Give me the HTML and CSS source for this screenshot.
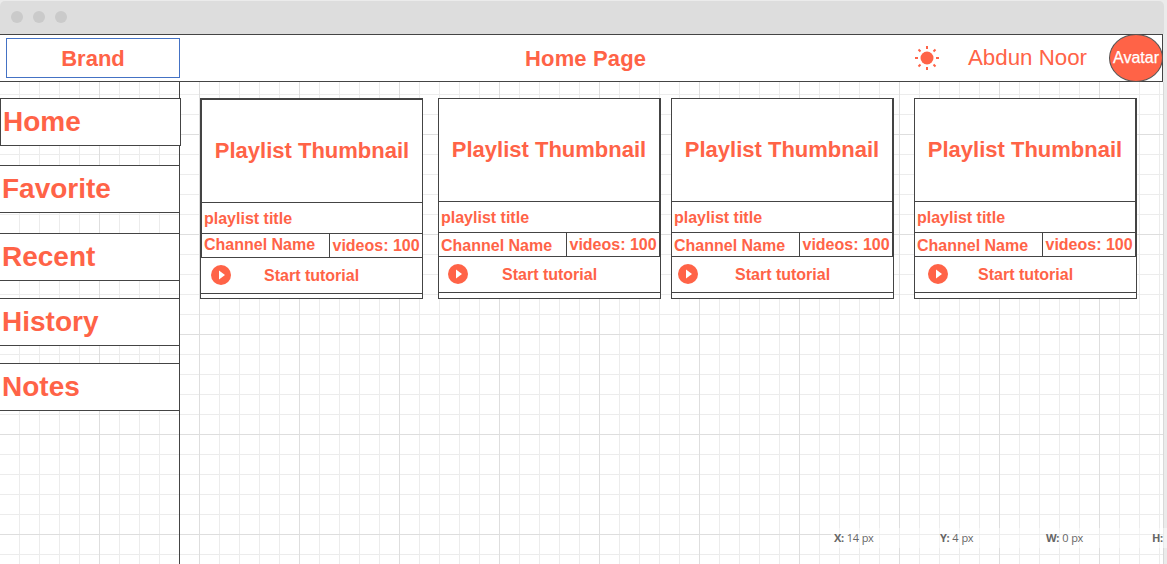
FILE: index.html
```html
<!DOCTYPE html>
<html lang="en">
<head>
<meta charset="utf-8">
<title>Home Page</title>
<link rel="stylesheet" href="styles.css">
</head>
<body>
<svg class="defs" width="0" height="0">
  <symbol id="play" viewBox="0 0 20 20"><circle cx="10" cy="10" r="10" fill="#ff6347"/><path d="M8 5.500v9l6-4.500z" fill="#fff"/></symbol>
</svg>
<div class="window">
  <div class="titlebar"><i class="dot"></i><i class="dot"></i><i class="dot"></i></div>
  <header class="header">
    <div class="brand">Brand</div>
    <h1 class="page-title">Home Page</h1>
    <svg class="sun" viewBox="0 0 24 24"><circle cx="12" cy="12" r="6.500" fill="#ff6347"/><path d="M12 0v3M12 21v3M0 12h3M21 12h3M3.500 3.500l2 2M18.500 18.500l2 2M3.500 20.500l2-2M18.500 5.500l2-2" stroke="#ff6347" stroke-width="2"/></svg>
    <span class="user">Abdun Noor</span>
    <div class="avatar">Avatar</div>
  </header>
  <div class="body">
    <nav class="sidebar">
      <a class="item active">Home</a>
      <a class="item favorite">Favorite</a>
      <a class="item recent">Recent</a>
      <a class="item history">History</a>
      <a class="item notes">Notes</a>
    </nav>
    <main class="cards">
      <article class="card first">
        <div class="info">
          <div class="thumb">Playlist Thumbnail</div>
          <div class="title">playlist title</div>
          <div class="meta"><span class="channel">Channel Name</span><span class="count">videos: 100</span></div>
        </div>
        <div class="start"><svg class="play"><use href="#play"/></svg><span>Start tutorial</span></div>
      </article>
      <article class="card second">
        <div class="info">
          <div class="thumb">Playlist Thumbnail</div>
          <div class="title">playlist title</div>
          <div class="meta"><span class="channel">Channel Name</span><span class="count">videos: 100</span></div>
        </div>
        <div class="start"><svg class="play"><use href="#play"/></svg><span>Start tutorial</span></div>
      </article>
      <article class="card third">
        <div class="info">
          <div class="thumb">Playlist Thumbnail</div>
          <div class="title">playlist title</div>
          <div class="meta"><span class="channel">Channel Name</span><span class="count">videos: 100</span></div>
        </div>
        <div class="start"><svg class="play"><use href="#play"/></svg><span>Start tutorial</span></div>
      </article>
      <article class="card fourth">
        <div class="info">
          <div class="thumb">Playlist Thumbnail</div>
          <div class="title">playlist title</div>
          <div class="meta"><span class="channel">Channel Name</span><span class="count">videos: 100</span></div>
        </div>
        <div class="start"><svg class="play"><use href="#play"/></svg><span>Start tutorial</span></div>
      </article>
    </main>
  </div>
</div>
<div class="status">
  <span><b>X:</b> 14 px</span><span><b>Y:</b> 4 px</span><span><b>W:</b> 0 px</span><span><b>H:</b></span>
</div>
</body>
</html>
```

FILE: styles.css
```css
* { box-sizing: border-box; }
body {
  margin: 0;
  height: 564px;
  overflow: hidden;
  background: #ebebeb;
  color: #ff6347;
  font-family: "Liberation Sans", Arial, sans-serif;
}
.defs { position: absolute; }
.window {
  display: flex;
  flex-direction: column;
  width: 1164px;
  height: 564px;
  padding-top: 1px;
}
.titlebar {
  display: flex;
  align-items: center;
  gap: 10px;
  height: 33px;
  padding: 0 0 1px 11px;
  background: #ddd;
  border-radius: 5px 5px 0 0;
}
.dot { width: 12px; height: 12px; border-radius: 50%; background: #cacaca; }
.header {
  display: flex;
  align-items: center;
  width: 1163px;
  height: 48px;
  padding-left: 6px;
  background: #fff;
  border: 1px solid #444;
  border-left: 0;
}
.brand {
  width: 174px;
  height: 40px;
  border: 1px solid #4472c4;
  font: bold 22px/39px "Liberation Sans", Arial, sans-serif;
  text-align: center;
}
.page-title {
  margin: 0 0 0 345px;
  padding-top: 1px;
  width: 389px;
  font-size: 22px;
  letter-spacing: .15px;
  line-height: 46px;
}
.sun { width: 24px; height: 24px; margin: 0 0 1px 1px; }
.user { margin-left: 29px; width: 141px; font-size: 22.300px; line-height: 44px; }
.avatar {
  flex: none;
  width: 54px;
  height: 48px;
  margin: -1px -1px -1px 0;
  border: 1px solid #555;
  border-radius: 50%;
  background: #ff6347;
  color: #fff;
  font-size: 16px;
  -webkit-text-stroke: .25px #fff;
  line-height: 45px;
  display: flex;
  justify-content: center;
}
.body {
  flex: 1;
  display: flex;
  border-right: 1px solid #d9d9d9;
  background-color: #fff;
  background-image:
    linear-gradient(90deg, transparent 99px, #dedede 99px),
    linear-gradient(transparent 99px, #dedede 99px),
    linear-gradient(90deg, transparent 19px, #ececec 19px),
    linear-gradient(transparent 19px, #ececec 19px);
  background-size: 100px 100px, 100px 100px, 20px 20px, 20px 20px;
  background-position: 0 0, 0 53px, 0 0, 0 -7px;
}
.sidebar {
  width: 180px;
  padding-top: 16px;
  border-right: 1px solid #444;
}
.item {
  display: block;
  height: 48px;
  padding-left: 2px;
  background: #fff;
  border: solid #444;
  border-width: 1px 0;
  font-size: 28px;
  font-weight: bold;
  line-height: 45px;
}
.active { width: 181px; border-width: 1px; }
.favorite { margin-top: 19px; }
.recent { margin-top: 20px; }
.history, .notes { margin-top: 17px; }
.cards { display: flex; align-items: flex-start; padding: 16px 0 0 20px; }
.card {
  flex: none;
  width: 223px;
  height: 201px;
  background: #fff;
  box-shadow: inset 0 0 0 1px #444;
  font-size: 16px;
  font-weight: bold;
}
.first { padding-top: 1px; }
.first .info { margin-left: 1px; }
.second { margin-left: 15px; }
.third { margin-left: 10px; }
.fourth { margin-left: 20px; }
.info { width: 222px; border: 1px solid #444; border-bottom: 0; }
.thumb {
  height: 103px;
  border-bottom: 1px solid #444;
  font-size: 22px;
  line-height: 102px;
  text-align: center;
}
.title { height: 31px; padding-left: 2px; border-bottom: 1px solid #444; line-height: 31px; }
.meta { display: flex; height: 24px; border-bottom: 1px solid #444; line-height: 25px; }
.channel { width: 127px; padding-left: 2px; }
.first .channel { line-height: 22px; }
.count { flex: 1; padding-left: 2.500px; border-left: 1px solid #444; line-height: 23px; white-space: nowrap; }
.first .count { line-height: 24px; }
.start {
  display: flex;
  align-items: center;
  height: 36px;
  border-bottom: 1px solid #444;
  padding-left: 10px;
  line-height: 34px;
}
.play { width: 20px; height: 20px; margin: 0 34px 2px 0; }
.first .start { padding-left: 11px; }
.first .play { margin-right: 33px; }
.third .start { padding-left: 7px; }
.third .play { margin-right: 37px; }
.fourth .start { padding-left: 14px; }
.fourth .play { margin-right: 30px; }
.status {
  position: absolute;
  left: 831px;
  top: 528px;
  display: flex;
  width: 336px;
  height: 20px;
  padding-left: 3px;
  overflow: hidden;
  background: rgba(255, 255, 255, .45);
  color: #666;
  font: 11px/20px "Open Sans", sans-serif;
  letter-spacing: -.4px;
  word-spacing: .7px;
}
.status span { flex: none; width: 106px; }
```
